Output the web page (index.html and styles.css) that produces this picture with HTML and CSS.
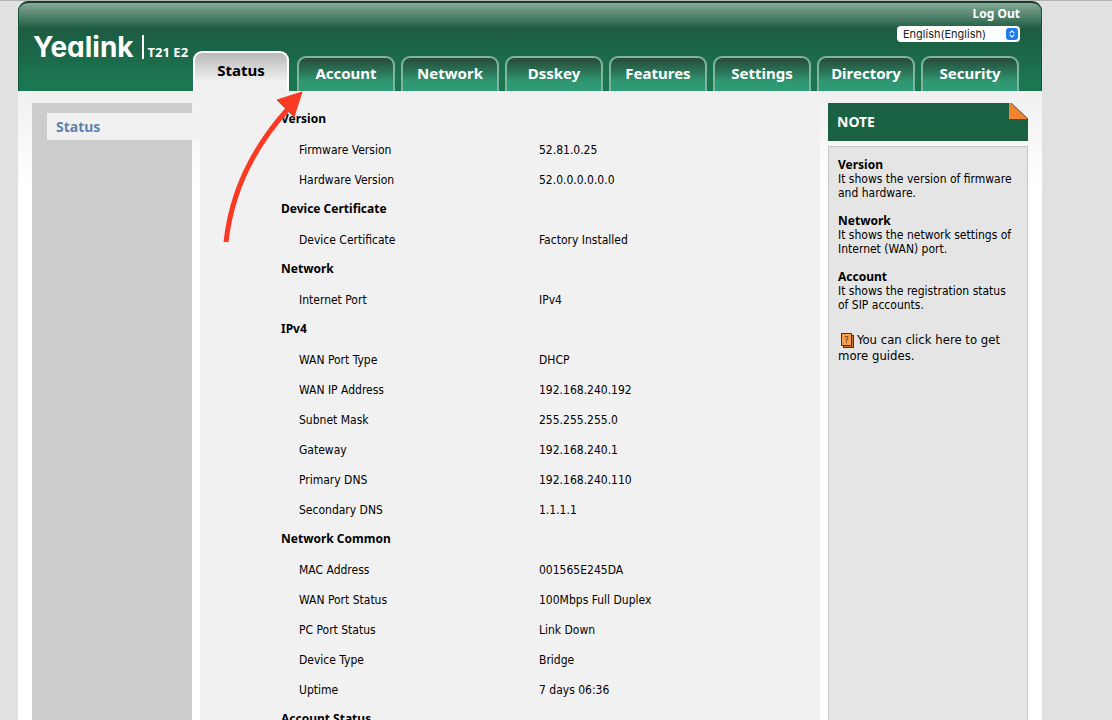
FILE: index.html
```html
<!DOCTYPE html>
<html lang="en">
<head>
<meta charset="utf-8">
<title>Yealink T21 E2</title>
<link rel="stylesheet" href="styles.css">
</head>
<body>
<div class="page">
  <header class="header">
    <div class="brand">
      <span class="logo">Yealink</span>
      <span class="model">T21 E2</span>
    </div>
    <div class="header-main">
      <div class="tools">
        <a class="logout" href="#logout">Log Out</a>
        <div class="language">
          <select class="language-select" aria-label="Language">
            <option>English(English)</option>
          </select>
          <svg class="language-icon" viewBox="0 0 12 12" aria-hidden="true">
            <rect width="12" height="12" rx="3" fill="#1c7cf0"/>
            <path d="M4 4.8 6 2.8 8 4.8M4 7.2 6 9.2 8 7.2" fill="none" stroke="#fff" stroke-width="1.1" stroke-linecap="round" stroke-linejoin="round"/>
          </svg>
        </div>
      </div>
      <nav class="tabs">
        <a class="tab tab-active" href="#status">Status</a>
        <a class="tab" href="#account">Account</a>
        <a class="tab" href="#network">Network</a>
        <a class="tab" href="#dsskey">Dsskey</a>
        <a class="tab" href="#features">Features</a>
        <a class="tab" href="#settings">Settings</a>
        <a class="tab" href="#directory">Directory</a>
        <a class="tab" href="#security">Security</a>
      </nav>
    </div>
  </header>
  <div class="columns">
    <nav class="sidebar">
      <a class="side-link" href="#status">Status</a>
    </nav>
    <main class="content">
      <table class="info">
        <colgroup><col class="col-label"><col></colgroup>
        <tr><th class="group" colspan="2">Version</th></tr>
        <tr><th class="label">Firmware Version</th><td>52.81.0.25</td></tr>
        <tr><th class="label">Hardware Version</th><td>52.0.0.0.0.0.0</td></tr>
        <tr><th class="group" colspan="2">Device Certificate</th></tr>
        <tr><th class="label">Device Certificate</th><td>Factory Installed</td></tr>
        <tr><th class="group" colspan="2">Network</th></tr>
        <tr><th class="label">Internet Port</th><td>IPv4</td></tr>
        <tr><th class="group" colspan="2">IPv4</th></tr>
        <tr><th class="label">WAN Port Type</th><td>DHCP</td></tr>
        <tr><th class="label">WAN IP Address</th><td>192.168.240.192</td></tr>
        <tr><th class="label">Subnet Mask</th><td>255.255.255.0</td></tr>
        <tr><th class="label">Gateway</th><td>192.168.240.1</td></tr>
        <tr><th class="label">Primary DNS</th><td>192.168.240.110</td></tr>
        <tr><th class="label">Secondary DNS</th><td>1.1.1.1</td></tr>
        <tr><th class="group" colspan="2">Network Common</th></tr>
        <tr><th class="label">MAC Address</th><td>001565E245DA</td></tr>
        <tr><th class="label">WAN Port Status</th><td>100Mbps Full Duplex</td></tr>
        <tr><th class="label">PC Port Status</th><td>Link Down</td></tr>
        <tr><th class="label">Device Type</th><td>Bridge</td></tr>
        <tr><th class="label">Uptime</th><td>7 days 06:36</td></tr>
        <tr><th class="group" colspan="2">Account Status</th></tr>
      </table>
    </main>
    <aside class="note">
      <h2 class="note-title">NOTE
        <svg class="note-fold" viewBox="0 0 19 16" aria-hidden="true">
          <path d="M2 0H19V16Z" fill="#f2f2f2"/>
          <path d="M0 0H2L19 16H0Z" fill="#f5822d"/>
          <path d="M2 0 19 16" stroke="#5f5a45" stroke-width="1"/>
        </svg>
      </h2>
      <div class="note-body">
        <h3>Version</h3>
        <p>It shows the version of firmware and hardware.</p>
        <h3>Network</h3>
        <p>It shows the network settings of Internet (WAN) port.</p>
        <h3>Account</h3>
        <p>It shows the registration status of SIP accounts.</p>
        <a class="guide" href="#guides"><svg class="guide-icon" viewBox="0 0 13 15" aria-hidden="true">
          <rect x="2.5" y="2.5" width="10" height="12" fill="#c9772c" stroke="#5a2c0c"/>
          <rect x=".5" y=".5" width="10" height="12" fill="#f7a04b" stroke="#5a2c0c"/>
          <path d="M4 4.5Q4 3.5 5.5 3.5T7 4.8Q7 5.8 5.5 6.5V8M5.5 9V10" fill="none" stroke="#5a2c0c"/>
        </svg>You can click here to get more guides.</a>
      </div>
    </aside>
  </div>
</div>
<svg class="pointer" viewBox="0 0 84 152" aria-hidden="true">
  <path d="M6 151C11 105 30 60 68 18" fill="none" stroke="#fb3a24" stroke-width="5"/>
  <path d="M82 1 57 9 74 26Z" fill="#fb3a24" stroke="#fb3a24" stroke-width="1"/>
</svg>
</body>
</html>
```

FILE: styles.css
```css
* { box-sizing: border-box; }

body {
  margin: 0;
  height: 100vh;
  overflow: hidden;
  position: relative;
  padding: 0 70px 0 18px;
  border-top: 1px solid #b4b4b4;
  background: #e1e1e1;
  color: #000;
  font: 12px/14px "DejaVu Sans Condensed", "Noto Sans", sans-serif;
}

a { color: inherit; text-decoration: none; }

.page {
  min-height: 100vh;
  display: flex;
  flex-direction: column;
}

.header {
  display: flex;
  height: 90px;
  padding: 0 21px 0 15px;
  border-top: 2px solid #103f2a;
  border-radius: 10px 10px 0 0;
  box-shadow: inset 1px 0 #15563a, inset -1px 0 #15563a;
  background: linear-gradient(#8aa99a 0, #719a86 5px, #1e5c41 26px, #1b6648 48px, #1b7751 78px, #1b7751 100%);
  color: #fff;
}

.brand {
  display: flex;
  align-items: flex-start;
  flex: 0 0 160px;
  padding-top: 30px;
  white-space: nowrap;
}

.logo {
  padding-right: 8px;
  font: 700 28px/28px Inter, sans-serif;
  font-feature-settings: "cv11";
}

.model {
  margin-top: 2px;
  padding: 11px 0 0 4px;
  border-left: 2px solid #fff;
  font: bold 13px/13px "Noto Sans", sans-serif;
}

.header-main {
  flex: 1;
  display: flex;
  flex-direction: column;
  justify-content: space-between;
}

.tools {
  display: flex;
  flex-direction: column;
  align-items: flex-end;
  gap: 5px;
  padding: 4px 1px 0 0;
}

.logout { font: bold 12px/14px "Noto Sans", sans-serif; }

.language { display: grid; width: 123px; }

.language-select,
.language-icon { grid-area: 1 / 1; }

.language-select {
  appearance: none;
  height: 16px;
  padding: 0 6px;
  border: 0;
  border-radius: 4px;
  background: #fff;
  color: #222;
  font: 11px/16px Inter, sans-serif;
}

.language-icon {
  width: 12px;
  place-self: center end;
  margin-right: 2px;
  pointer-events: none;
}

.tabs {
  display: flex;
  align-items: flex-end;
  gap: 6px;
  padding-right: 2px;
}

.tab {
  flex: 1 1 98px;
  height: 35px;
  border: 2px solid #7eb59c;
  border-bottom: 0;
  border-radius: 9px 9px 0 0;
  background: linear-gradient(#27493a, #2a6f54 12px, #2f9873 24px, #2f9b76);
  font: bold 15px/30px "Noto Sans", sans-serif;
  text-align: center;
}

.tab-active {
  flex-basis: 96px;
  height: 40px;
  margin-right: 2px;
  border-color: #fff;
  background: linear-gradient(#b9b9b9, #f0f0f0 28px, #f1f1f1);
  color: #000;
  line-height: 34px;
}

.columns {
  flex: 1;
  display: flex;
  padding: 12px 14px 0;
  background: linear-gradient(#f0f0f0, #fff 95px);
}

.sidebar {
  flex: 0 0 160px;
  padding: 10px 0 0 15px;
  background: #ccc;
}

.side-link {
  display: block;
  margin-right: -8px;
  padding-left: 9px;
  background: #f1f1f1;
  color: #5e83ae;
  font: bold 14px/27px "Noto Sans", sans-serif;
}

.content {
  flex: 1;
  margin: 0 8px;
  padding: 1px 0 0 81px;
  background: #f1f1f1;
}

.info {
  width: 100%;
  border-collapse: collapse;
  table-layout: fixed;
}

.col-label { width: 258px; }

.info tr { height: 30px; }

.info th,
.info td {
  padding: 2px 0 0;
  text-align: left;
  font-weight: normal;
}

.info .label { padding-left: 18px; }

.info .group {
  padding-top: 0;
  font: bold 12px/14px "Noto Sans", sans-serif;
}

.note {
  flex: 0 0 200px;
  display: flex;
  flex-direction: column;
  gap: 5px;
}

.note-title {
  display: flex;
  justify-content: space-between;
  margin: 0;
  padding-left: 9px;
  background: #1b6245;
  color: #fff;
  font: bold 14px/38px "Noto Sans", sans-serif;
}

.note-fold { width: 19px; height: 16px; }

.note-body {
  flex: 1;
  padding: 11px 9px;
  border: 1px solid #c6c6c6;
  background: #e5e5e5;
}

.note-body h3 {
  margin: 0;
  font: bold 12px/14px "Noto Sans", sans-serif;
}

.note-body p { margin: 0 0 14px; }

.guide {
  display: block;
  margin-top: 20px;
  font-size: 13px;
  line-height: 16px;
}

.guide-icon {
  width: 13px;
  height: 15px;
  margin: 0 3px;
  vertical-align: middle;
}

.pointer {
  position: absolute;
  left: 220px;
  top: 90px;
  width: 84px;
  height: 152px;
  pointer-events: none;
}
```
